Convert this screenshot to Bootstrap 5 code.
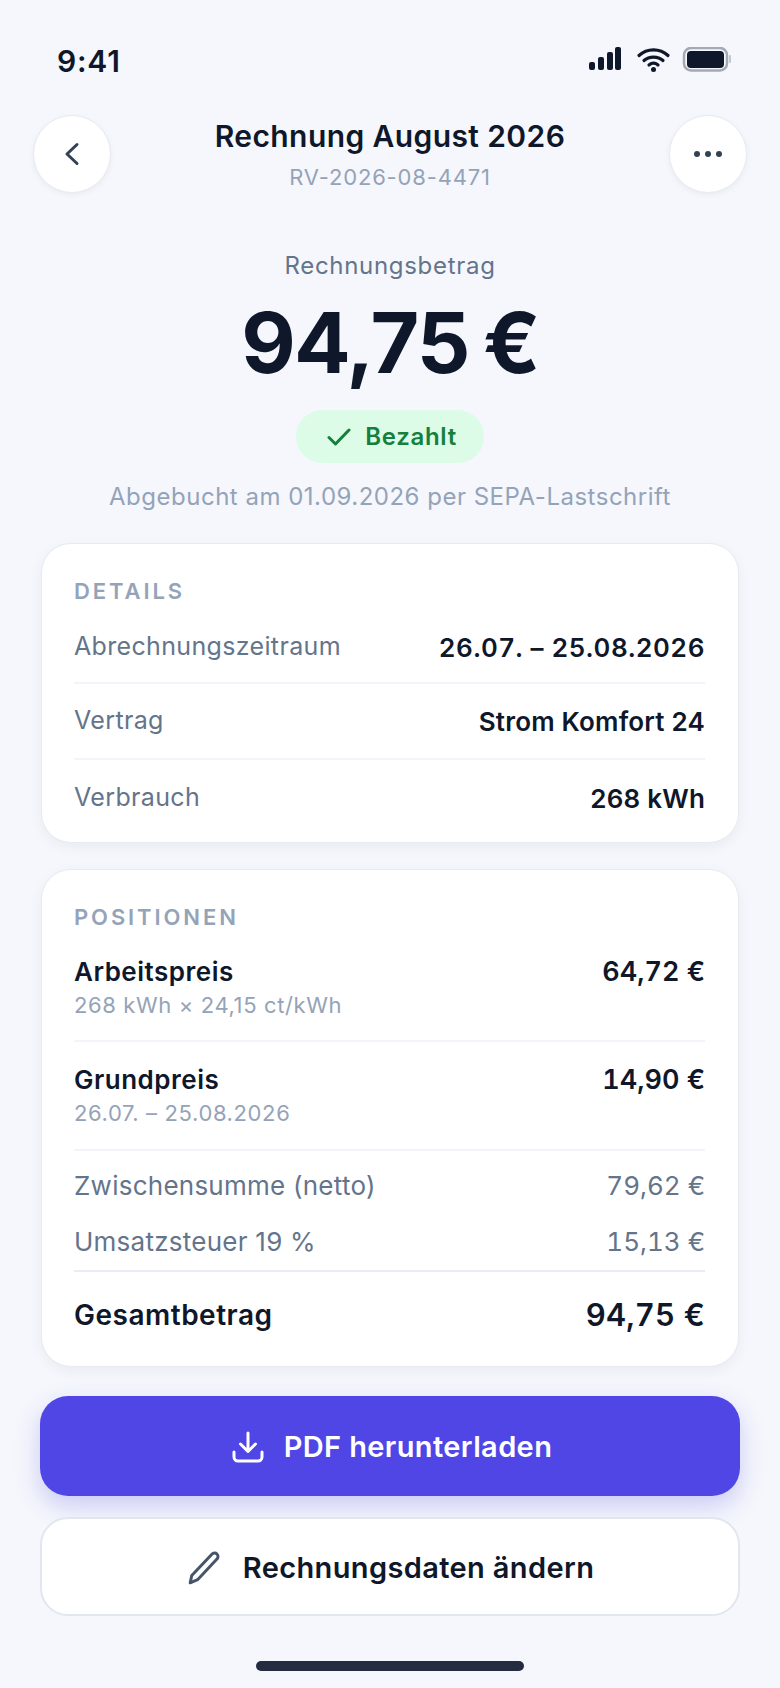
<!DOCTYPE html>
<html lang="de">
<head>
<meta charset="utf-8">
<title>Rechnung August 2026</title>
<link href="https://cdn.jsdelivr.net/npm/bootstrap@5.3.0/dist/css/bootstrap.min.css" rel="stylesheet">
<style>
html,body{margin:0;height:1688px;overflow:hidden}
body{background:#f5f7fc;font-family:Inter,"Liberation Sans",sans-serif;color:#0f172a;width:780px}
.tnum{font-variant-numeric:tabular-nums}
.stat-bar{height:115px;padding:43px 47px 0 57px;align-items:flex-start}
.stat-time{font-size:30px;font-weight:600;line-height:36px;letter-spacing:.8px}
.head-row{padding:0 33px 0 33px;height:78px}
.round-btn{width:78px;height:78px;border-radius:50%;background:#fff;border:1px solid #e7eaf1;box-shadow:0 2px 6px rgba(15,23,42,.05);padding:0;flex:none}
.head-title{font-size:30px;font-weight:600;line-height:38px;letter-spacing:.4px;margin-top:2px}
.head-sub{font-size:22px;line-height:28px;color:#94a3b8;margin-top:8px;letter-spacing:.83px}
.hero-box{padding-top:57px}
.hero-label{font-size:24px;line-height:32px;color:#64748b;letter-spacing:.7px}
.hero-amount{font-size:84px;font-weight:700;line-height:100px;letter-spacing:-1.7px;word-spacing:-4px;margin-top:11px}
.paid-pill{height:53px;width:188px;border-radius:27px;background:#dcfce7;color:#15803d;font-size:24px;font-weight:600;margin-top:17px;gap:14px;letter-spacing:.7px;padding-left:4px}
.hero-note{font-size:24px;line-height:32px;color:#94a3b8;margin-top:18px;letter-spacing:.5px}
.sheet{margin:0 41px;background:#fff;border:1px solid #e7eaf1;border-radius:30px;box-shadow:0 4px 14px rgba(15,23,42,.05);padding:0 33px 0 32px}
.sheet-a{margin-top:30px;height:300px;padding-top:33px}
.sheet-b{margin-top:26px;height:498px;padding-top:33px}
.sheet-cap{font-size:22px;font-weight:600;line-height:28px;letter-spacing:2.9px;color:#94a3b8;margin-bottom:7px}
.kv-row{height:76px;border-bottom:2px solid #f1f4f8;font-size:25px}
.kv-row.first-kv{height:72px}
.kv-row:last-child{border-bottom:0}
.kv-key{color:#64748b;letter-spacing:.34px}
.kv-val{font-weight:600;font-size:26px;letter-spacing:.2px}
.kv-val.tnum{letter-spacing:.5px}
.item-row{height:109px;border-bottom:2px solid #f1f4f8;padding-top:21px}
.item-row.first-item{height:104px;padding-top:17px}
.item-name{font-size:26px;font-weight:600;line-height:34px;letter-spacing:.5px}
.item-sub{font-size:22px;line-height:28px;color:#94a3b8;margin-top:2px;letter-spacing:.62px}
.item-price{font-size:27px;font-weight:600;line-height:34px}
.sum-row{height:56px;font-size:26px;color:#64748b;letter-spacing:.25px}
.sum-row .tnum{letter-spacing:0}
.sum-first{margin-top:6px}
.total-row{height:88px;margin-top:1px;border-top:2px solid #e9edf3;font-size:28px;font-weight:600;letter-spacing:.5px}
.total-price{font-size:31px;letter-spacing:.2px}
.act-wrap{margin:29px 40px 0;gap:21px}
.act-btn{height:100px;border-radius:28px;font-size:29px;font-weight:600;gap:20px;width:100%;letter-spacing:.37px;padding-top:3px}
.act-main{background:#4f46e5;color:#fff;border:0;box-shadow:0 10px 24px rgba(79,70,229,.25);padding-left:10px}
.act-alt{height:99px;background:#fff;color:#0f172a;border:2px solid #e2e6ee;padding-left:7px}
.home-bar{width:268px;height:10px;border-radius:5px;background:#252b40;margin:45px auto 0}
</style>
</head>
<body>
<div class="stat-bar d-flex justify-content-between">
  <div class="stat-time">9:41</div>
  <svg width="144" height="26" viewBox="0 0 144 26" class="mt-1">
    <rect x="0" y="15" width="6" height="8" rx="2" fill="#0f172a"/><rect x="9" y="10" width="6" height="13" rx="2" fill="#0f172a"/><rect x="18" y="5" width="6" height="18" rx="2" fill="#0f172a"/><rect x="26" y="0" width="6" height="23" rx="2" fill="#0f172a"/>
    <g fill="none" stroke="#0f172a" stroke-width="3.200" stroke-linecap="round"><path d="M50 8.500C58 1 71 1 79 8.500"/><path d="M55 13.500C60 9 69 9 74 13.500"/><path d="M60 18C63 15.500 66 15.500 69 18"/></g><circle cx="64.500" cy="22.500" r="2.500" fill="#0f172a"/>
    <rect x="95" y="1" width="43" height="22.500" rx="7" fill="none" stroke="#a4a9b6" stroke-width="2.500"/>
    <rect x="98" y="4" width="37" height="17" rx="4" fill="#0f172a"/>
    <rect x="140" y="8" width="2" height="8" rx="1" fill="#c4c8d0"/>
  </svg>
</div>
<div class="head-row d-flex justify-content-between align-items-start">
  <button class="round-btn d-flex align-items-center justify-content-center" aria-label="Zurück">
    <svg width="16" height="26" viewBox="0 0 16 26"><path d="M13 3.500 3 13l10 9.500" fill="none" stroke="#334155" stroke-width="3" stroke-linecap="round" stroke-linejoin="round"/></svg>
  </button>
  <div class="text-center">
    <div class="head-title">Rechnung August 2026</div>
    <div class="head-sub">RV-2026-08-4471</div>
  </div>
  <button class="round-btn d-flex align-items-center justify-content-center" aria-label="Mehr">
    <svg width="30" height="8" viewBox="0 0 30 8"><circle cx="4" cy="4" r="3" fill="#334155"/><circle cx="15" cy="4" r="3" fill="#334155"/><circle cx="26" cy="4" r="3" fill="#334155"/></svg>
  </button>
</div>
<div class="hero-box d-flex flex-column align-items-center text-center">
  <div class="hero-label">Rechnungsbetrag</div>
  <div class="hero-amount">94,75 €</div>
  <div class="paid-pill d-flex align-items-center justify-content-center">
    <svg width="24" height="20" viewBox="0 0 24 20"><path d="M2 10.500 8.500 17 22 3" fill="none" stroke="#15803d" stroke-width="3" stroke-linecap="round" stroke-linejoin="round"/></svg>
    <span>Bezahlt</span>
  </div>
  <div class="hero-note">Abgebucht am 01.09.2026 per SEPA-Lastschrift</div>
</div>
<section class="sheet sheet-a">
  <div class="sheet-cap">DETAILS</div>
  <div class="kv-row first-kv d-flex justify-content-between align-items-center"><span class="kv-key">Abrechnungszeitraum</span><span class="kv-val tnum">26.07. – 25.08.2026</span></div>
  <div class="kv-row d-flex justify-content-between align-items-center"><span class="kv-key">Vertrag</span><span class="kv-val">Strom Komfort 24</span></div>
  <div class="kv-row d-flex justify-content-between align-items-center"><span class="kv-key">Verbrauch</span><span class="kv-val">268 kWh</span></div>
</section>
<section class="sheet sheet-b">
  <div class="sheet-cap">POSITIONEN</div>
  <div class="item-row first-item d-flex justify-content-between align-items-start"><div><div class="item-name">Arbeitspreis</div><div class="item-sub">268 kWh × 24,15 ct/kWh</div></div><div class="item-price tnum">64,72 €</div></div>
  <div class="item-row d-flex justify-content-between align-items-start"><div><div class="item-name">Grundpreis</div><div class="item-sub">26.07. – 25.08.2026</div></div><div class="item-price tnum">14,90 €</div></div>
  <div class="sum-row sum-first d-flex justify-content-between align-items-center"><span>Zwischensumme (netto)</span><span class="tnum">79,62 €</span></div>
  <div class="sum-row d-flex justify-content-between align-items-center"><span>Umsatzsteuer 19 %</span><span class="tnum">15,13 €</span></div>
  <div class="total-row d-flex justify-content-between align-items-center"><span>Gesamtbetrag</span><span class="total-price tnum">94,75 €</span></div>
</section>
<div class="act-wrap d-flex flex-column">
  <button class="act-btn act-main d-flex align-items-center justify-content-center">
    <svg width="32" height="32" viewBox="0 0 32 32" fill="none" stroke="#fff" stroke-width="3" stroke-linecap="round" stroke-linejoin="round"><path d="M16 2v18M8.500 13 16 20.500 23.500 13"/><path d="M2 21v5a4 4 0 0 0 4 4h20a4 4 0 0 0 4-4v-5"/></svg>
    <span>PDF herunterladen</span>
  </button>
  <button class="act-btn act-alt d-flex align-items-center justify-content-center">
    <svg width="36" height="36" viewBox="0 0 34 34" fill="none" stroke="#475569" stroke-width="2.800" stroke-linecap="round" stroke-linejoin="round"><path d="M3 31l1.500-7L23.500 4c1.300-1.400 3.500-1.500 4.800-.2s1.300 3.500 0 4.800L10 28z"/></svg>
    <span>Rechnungsdaten ändern</span>
  </button>
</div>
<div class="home-bar"></div>
<script src="https://cdn.jsdelivr.net/npm/bootstrap@5.3.0/dist/js/bootstrap.bundle.min.js"></script>
</body>
</html>
